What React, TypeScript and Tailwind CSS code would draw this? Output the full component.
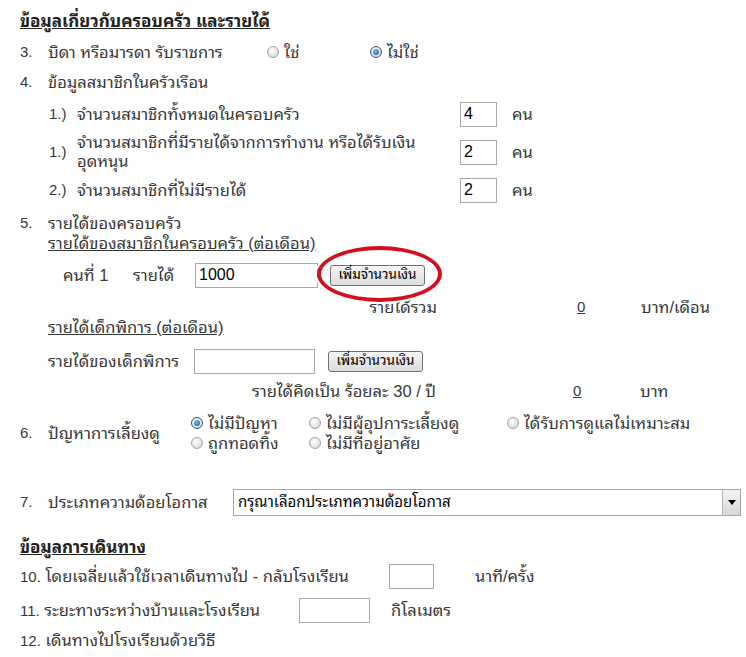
import React from "react";

const Radio = ({ checked }: { checked?: boolean }) => (
  <span
    className={
      "relative inline-block w-[12px] h-[12px] shrink-0 rounded-full border bg-[radial-gradient(circle_at_40%_35%,#ffffff,#d0d0d0)] " +
      (checked ? "border-[#3f4f60]" : "border-[#a3a3a3]")
    }
  >
    {checked && (
      <span className="absolute left-[2px] top-[2px] w-[6px] h-[6px] rounded-full bg-[radial-gradient(circle_at_40%_35%,#7cc0f5,#0b4f92)]" />
    )}
  </span>
);

const Box = ({ className, value }: { className: string; value?: string }) => (
  <span
    className={
      "inline-flex items-center h-[25px] border border-[#a9a9a9] bg-white pl-[3px] text-[16px] text-black shrink-0 " +
      className
    }
  >
    {value}
  </span>
);

const Btn = () => (
  <span className="inline-flex items-center justify-center w-[95px] h-[21px] rounded-[3px] border border-[#707070] bg-[linear-gradient(#f6f6f6,#dcdcdc)] text-[13.5px] text-black shrink-0">
    เพิ่มจำนวนเงิน
  </span>
);

const Num = ({ children, w }: { children: React.ReactNode; w: string }) => (
  <span className={"shrink-0 text-[15px] " + w}>{children}</span>
);

export default function App() {
  return (
    <div
      className="w-[746px] h-[657px] bg-white overflow-hidden pl-[20px] text-[16.5px] text-[#383838] leading-[18px]"
      style={{ fontFamily: "'Liberation Sans', 'Noto Sans Thai Looped', sans-serif" }}
    >
      <div className="h-[12px]" />
      <div className="h-[20px] flex items-center font-bold underline text-[17px] text-[#222]">
        ข้อมูลเกี่ยวกับครอบครัว และรายได้
      </div>

      {/* 3 */}
      <div className="h-[40px] flex items-center">
        <Num w="w-[28px]">3.</Num>
        <span className="w-[219px] shrink-0">บิดา หรือมารดา รับราชการ</span>
        <Radio />
        <span className="ml-[5px] w-[86px] shrink-0">ใช่</span>
        <Radio checked />
        <span className="ml-[5px]">ไม่ใช่</span>
      </div>

      {/* 4 */}
      <div className="h-[20px] flex items-center">
        <Num w="w-[28px]">4.</Num>
        <span>ข้อมูลสมาชิกในครัวเรือน</span>
      </div>
      <div className="h-[44px] flex items-center pl-[29px]">
        <Num w="w-[28px]">1.)</Num>
        <span className="w-[383px] shrink-0">จำนวนสมาชิกทั้งหมดในครอบครัว</span>
        <Box className="w-[37px]" value="4" />
        <span className="ml-[15px]">คน</span>
      </div>
      <div className="h-[32px] flex items-center pl-[29px]">
        <Num w="w-[28px]">1.)</Num>
        <span className="w-[383px] shrink-0 leading-[19px]">
          จำนวนสมาชิกที่มีรายได้จากการทำงาน หรือได้รับเงิน
          <br />
          อุดหนุน
        </span>
        <Box className="w-[37px]" value="2" />
        <span className="ml-[15px]">คน</span>
      </div>
      <div className="h-[44px] flex items-center pl-[29px]">
        <Num w="w-[28px]">2.)</Num>
        <span className="w-[383px] shrink-0">จำนวนสมาชิกที่ไม่มีรายได้</span>
        <Box className="w-[37px]" value="2" />
        <span className="ml-[15px]">คน</span>
      </div>

      {/* 5 */}
      <div className="h-[22px] flex items-center">
        <Num w="w-[28px]">5.</Num>
        <span>รายได้ของครอบครัว</span>
      </div>
      <div className="h-[18px] flex items-center pl-[28px]">
        <span className="underline">รายได้ของสมาชิกในครอบครัว (ต่อเดือน)</span>
      </div>
      <div className="h-[46px] flex items-center pl-[43px]">
        <span className="w-[70px] shrink-0">คนที่ 1</span>
        <span className="w-[62px] shrink-0">รายได้</span>
        <Box className="w-[123px]" value="1000" />
        <span className="relative ml-[12px] inline-flex">
          <span className="absolute left-[-13px] top-[-19px] w-[125px] h-[56px] rounded-[50%] border-[4px] border-[#d3111c] shadow-[0_0_0_2px_#ffffff] z-10" />
          <span className="relative z-20 inline-flex">
            <Btn />
          </span>
        </span>
      </div>
      <div className="h-[18px] flex items-center">
        <span className="w-[417px] shrink-0 text-right">รายได้รวม</span>
        <span className="ml-[140px] w-[64px] shrink-0 text-[15px]">
          <span className="underline">0</span>
        </span>
        <span>บาท/เดือน</span>
      </div>
      <div className="h-[22px] flex items-center pl-[28px]">
        <span className="underline">รายได้เด็กพิการ (ต่อเดือน)</span>
      </div>
      <div className="h-[46px] flex items-center pl-[28px]">
        <span className="w-[146px] shrink-0">รายได้ของเด็กพิการ</span>
        <Box className="w-[121px]" />
        <span className="ml-[13px] inline-flex">
          <Btn />
        </span>
      </div>
      <div className="h-[14px] flex items-center">
        <span className="w-[416px] shrink-0 text-right whitespace-nowrap">รายได้คิดเป็น ร้อยละ 30 / ปี</span>
        <span className="ml-[137px] w-[67px] shrink-0 text-[15px]">
          <span className="underline">0</span>
        </span>
        <span>บาท</span>
      </div>

      {/* 6 */}
      <div className="h-[15px]" />
      <div className="h-[40px] flex items-center">
        <Num w="w-[28px]">6.</Num>
        <span className="w-[143px] shrink-0">ปัญหาการเลี้ยงดู</span>
        <div className="flex flex-col">
          <div className="h-[20px] flex items-center">
            <span className="w-[118px] shrink-0 flex items-center">
              <Radio checked />
              <span className="ml-[5px]">ไม่มีปัญหา</span>
            </span>
            <span className="w-[198px] shrink-0 flex items-center">
              <Radio />
              <span className="ml-[5px]">ไม่มีผู้อุปการะเลี้ยงดู</span>
            </span>
            <span className="flex items-center">
              <Radio />
              <span className="ml-[5px]">ได้รับการดูแลไม่เหมาะสม</span>
            </span>
          </div>
          <div className="h-[20px] flex items-center">
            <span className="w-[118px] shrink-0 flex items-center">
              <Radio />
              <span className="ml-[5px]">ถูกทอดทิ้ง</span>
            </span>
            <span className="flex items-center">
              <Radio />
              <span className="ml-[5px]">ไม่มีที่อยู่อาศัย</span>
            </span>
          </div>
        </div>
      </div>

      {/* 7 */}
      <div className="h-[35px]" />
      <div className="h-[28px] flex items-center">
        <Num w="w-[28px]">7.</Num>
        <span className="w-[185px] shrink-0">ประเภทความด้อยโอกาส</span>
        <span className="w-[508px] h-[27px] shrink-0 flex items-stretch border border-[#a5a5a5] bg-white">
          <span className="flex-1 flex items-center pl-[4px] text-black text-[15px]">กรุณาเลือกประเภทความด้อยโอกาส</span>
          <span className="w-[18px] flex items-center justify-center border-l border-[#b5b5b5] bg-[linear-gradient(#f4f4f4,#d6d6d6)]">
            <svg width="8" height="5" viewBox="0 0 8 5">
              <path d="M0 0H8L4 5Z" fill="#000" />
            </svg>
          </span>
        </span>
      </div>

      <div className="h-[22px]" />
      <div className="h-[20px] flex items-center font-bold underline text-[17px] text-[#222]">ข้อมูลการเดินทาง</div>

      <div className="h-[4px]" />
      <div className="h-[28px] flex items-center">
        <span className="w-[369px] shrink-0">
          <span className="text-[15px]">10.</span> โดยเฉลี่ยแล้วใช้เวลาเดินทางไป - กลับโรงเรียน
        </span>
        <Box className="w-[45px]" />
        <span className="ml-[41px]">นาที/ครั้ง</span>
      </div>
      <div className="h-[6px]" />
      <div className="h-[28px] flex items-center">
        <span className="w-[279px] shrink-0">
          <span className="text-[15px]">11.</span> ระยะทางระหว่างบ้านและโรงเรียน
        </span>
        <Box className="w-[71px]" />
        <span className="ml-[21px]">กิโลเมตร</span>
      </div>
      <div className="h-[6px]" />
      <div className="h-[20px] flex items-center">
        <span>
          <span className="text-[15px]">12.</span> เดินทางไปโรงเรียนด้วยวิธี
        </span>
      </div>
    </div>
  );
}
